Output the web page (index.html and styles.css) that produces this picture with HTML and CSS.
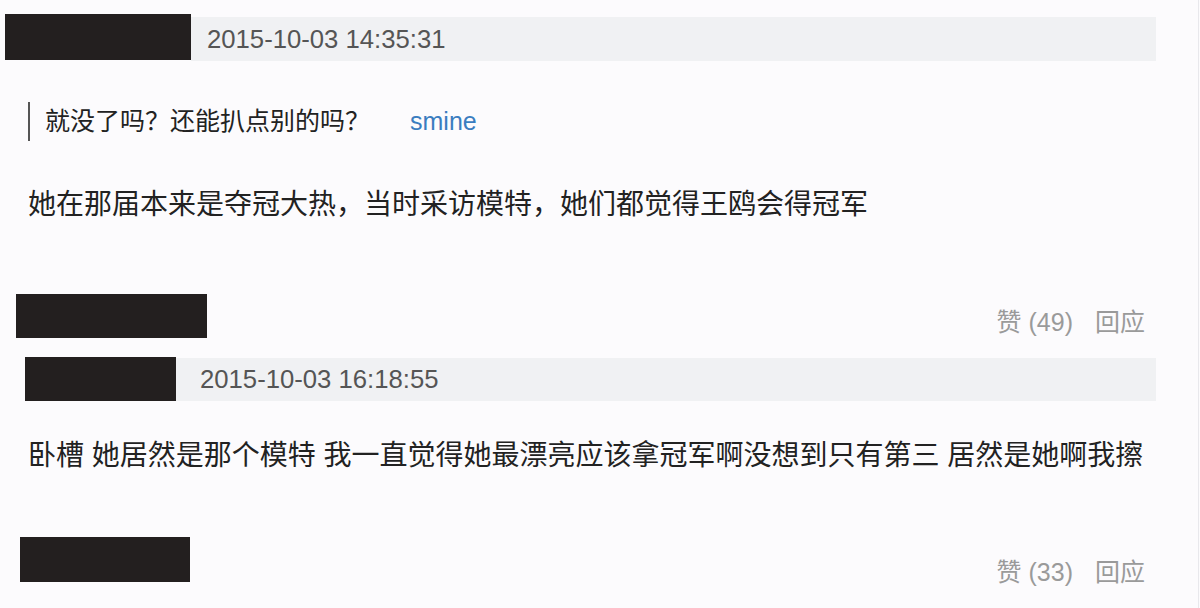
FILE: index.html
```html
<!DOCTYPE html>
<html lang="zh-CN">
 <head>
 <meta charset="UTF-8">
 <title>评论</title>
 <link rel="stylesheet" href="styles.css">
 </head>
 <body>
 <div class="page">
  <div class="head head-first">
   <div class="mask mask-a"></div>
   <div class="date">2015-10-03 14:35:31</div>
  </div>
  <div class="quote">就没了吗？还能扒点别的吗？<a class="who" href="#">smine</a></div>
  <p class="text text-a">她在那届本来是夺冠大热，当时采访模特，她们都觉得王鸥会得冠军</p>
  <div class="foot foot-a">
   <div class="mask mask-b"></div>
   <div class="acts"><span>赞 (49)</span><span>回应</span></div>
  </div>

  <div class="head head-second">
   <div class="mask mask-c"></div>
   <div class="date">2015-10-03 16:18:55</div>
  </div>
  <p class="text text-b">卧槽 她居然是那个模特 我一直觉得她最漂亮应该拿冠军啊没想到只有第三 居然是她啊我擦</p>
  <div class="foot foot-b">
   <div class="mask mask-d"></div>
   <div class="acts"><span>赞 (33)</span><span>回应</span></div>
  </div>
 </div>
 </body>
</html>
```

FILE: styles.css
```css
* {
padding: 0px;
margin: 0px;
}

html,
body {
width: 100%;
height: 100%;
background: #fcfbfd;
}

body {
font-family: "Liberation Sans", "Noto Sans CJK SC", sans-serif;
color: #222;
}

.page {
width: 1198px;
height: 608px;
border-right: 1px solid #e8e8ec;
overflow: hidden;
}

.mask {
background: #231f1f;
flex: none;
}

/* header rows: name box + grey date bar */
.head {
display: flex;
align-items: flex-start;
margin-right: 42px;
}

.head-first {
margin-top: 14px;
height: 47px;
margin-left: 5px;
}

.head-first .mask {
width: 186px;
height: 46px;
}

.head-first .date {
margin-top: 3px;
height: 44px;
line-height: 44px;
}

.head-second {
margin-top: 19px;
margin-left: 25px;
height: 44px;
}

.head-second .mask {
width: 151px;
height: 44px;
}

.head-second .date {
margin-top: 1px;
height: 43px;
line-height: 43px;
padding-left: 24px;
}

.date {
flex: 1;
background: #f0f1f3;
padding-left: 16px;
font-size: 25.7px;
color: #555;
}

.quote {
margin-top: 41px;
margin-left: 28px;
height: 39px;
line-height: 39px;
border-left: 2px solid #555;
padding-left: 15px;
font-size: 25px;
color: #222;
}

.who {
margin-left: 40px;
color: #3a7dc0;
text-decoration: none;
}

.text {
margin-left: 28px;
height: 40px;
line-height: 40px;
white-space: nowrap;
font-size: 28px;
}

.text-a {
margin-top: 44px;
}

.text-b {
margin-top: 35px;
}

/* footer rows: box on the left, actions on the right */
.foot {
display: flex;
justify-content: space-between;
align-items: flex-start;
padding-right: 53px;
}

.foot-a {
margin-top: 69px;
padding-left: 16px;
}

.foot-a .mask {
width: 191px;
height: 44px;
}

.foot-a .acts {
margin-top: 13px;
}

.foot-b {
margin-top: 61px;
padding-left: 20px;
}

.foot-b .mask {
width: 170px;
height: 45px;
}

.foot-b .acts {
margin-top: 20px;
}

.acts {
display: flex;
gap: 22px;
font-size: 25px;
line-height: 30px;
color: #9a9a9a;
}
```
